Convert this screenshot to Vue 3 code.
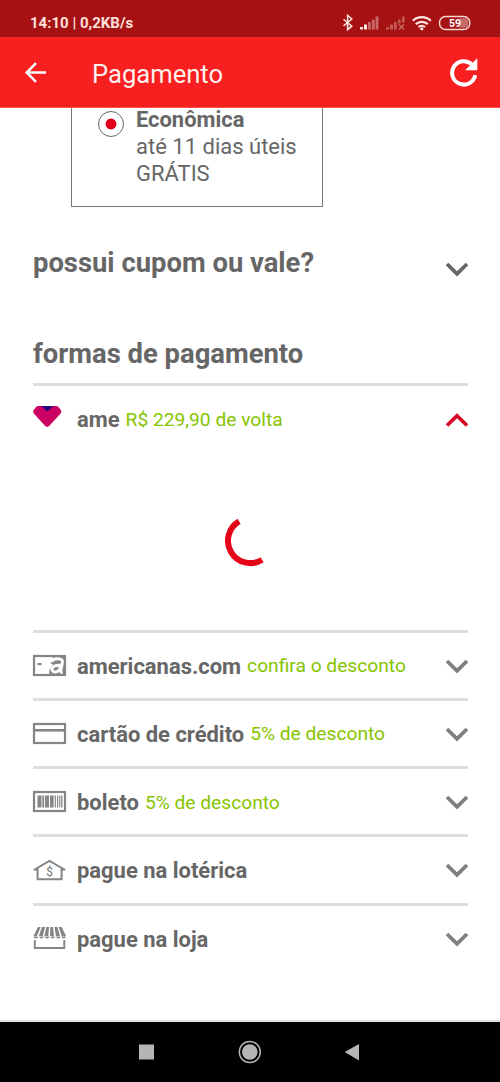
<script setup>
const methods = [
  { id: 'ame', name: 'ame', note: 'R$ 229,90 de volta', open: true },
  { id: 'gift', name: 'americanas.com', note: 'confira o desconto' },
  { id: 'card', name: 'cartão de crédito', note: '5% de desconto' },
  { id: 'boleto', name: 'boleto', note: '5% de desconto' },
  { id: 'loterica', name: 'pague na lotérica' },
  { id: 'loja', name: 'pague na loja' },
]
const bars = [[4.5, 4], [9.3, 1.8], [12, 4], [17, 3.6], [21.7, 1.2], [24, 1.2], [26.2, 1.2], [28.2, 1.3]]
</script>

<template>
  <div class="screen">
    <header class="status">
      <span class="clock">14:10 | 0,2KB/s</span>
      <svg class="status-icons" width="132" height="20" viewBox="0 0 132 20">
        <path d="M3.5 6.2l8.300 7-4.200 3.500V2.300l4.200 3.700-8.300 7" fill="none" stroke="#fde9e5" stroke-width="1.500" />
        <g fill="#fde9e5">
          <rect x="20" y="14" width="3" height="2.500" />
          <rect x="24" y="11.500" width="3" height="5" />
          <g opacity=".4">
            <rect x="28" y="9" width="2.800" height="7.500" />
            <rect x="31.900" y="6.500" width="2.800" height="10" />
            <rect x="35.600" y="3.500" width="2.800" height="13" />
          </g>
          <g opacity=".32">
            <rect x="46" y="14" width="3" height="2.500" />
            <rect x="50" y="11.500" width="3" height="5" />
            <rect x="54" y="9" width="2.800" height="7.500" />
            <rect x="58" y="6.500" width="2.600" height="4" />
            <rect x="62" y="3.500" width="2.600" height="6" />
          </g>
        </g>
        <path d="M59 11.500l5 5m0-5l-5 5" stroke="#fde9e5" stroke-width="1.400" opacity=".4" />
        <g fill="none" stroke="#fde9e5" stroke-width="2.200">
          <path d="M72.800 7.800a13 13 0 0 1 18 0" />
          <path d="M75.800 11.100a9 9 0 0 1 12 0" />
          <path d="M78.500 14a5 5 0 0 1 6.600 0" />
        </g>
        <circle cx="81.800" cy="15.800" r="1.600" fill="#fde9e5" />
        <path d="M119.500 5.300h5.500q3.200 0 3.200 3v3.500q0 3-3.200 3h-5.500z" fill="#c76a69" />
        <rect x="99.500" y="3.500" width="30.300" height="13" rx="6" fill="none" stroke="#f6d5d0" stroke-width="1.500" />
        <text x="109" y="13.900" class="battery">59</text>
      </svg>
    </header>

    <div class="appbar">
      <svg class="back" width="24" height="24" viewBox="0 0 24 24">
        <path d="M22 12.500H3M12 3.200L2.700 12.500l9.300 9.300" fill="none" stroke="#fff" stroke-width="2.500" />
      </svg>
      <h1>Pagamento</h1>
      <svg class="reload" width="30" height="30" viewBox="0 0 30 30">
        <path d="M22.700 7.200A11.700 11.700 0 1 0 26.300 18.200" fill="none" stroke="#fff" stroke-width="4" />
        <path d="M28.300 1.200V13.300H16.200z" fill="#fff" />
      </svg>
    </div>

    <main class="content">
      <section class="shipping">
        <span class="radio"></span>
        <div class="ship-text">
          <strong>Econômica</strong>
          <span>até 11 dias úteis</span>
          <span>GRÁTIS</span>
        </div>
      </section>

      <section class="coupon">
        <h2>possui cupom ou vale?</h2>
        <svg class="chev" width="24" height="16" viewBox="0 0 24 16">
          <path d="M2 3L12 12.800 22 3" fill="none" stroke="#666" stroke-width="3.800" />
        </svg>
      </section>

      <h2 class="pay-title">formas de pagamento</h2>

      <ul class="methods">
        <li v-for="m in methods" :key="m.id" :class="{ open: m.open }">
          <div class="head">
            <svg class="icon" width="34" height="24" viewBox="0 0 34 24">
              <template v-if="m.id === 'ame'">
                <path d="M5.500 -1h17.500q1.500 0 2.500 1l2.500 3.300q1 1.600-.4 3.100L16.400 18.800q-2.200 2.300-4.400 0L.8 6.400Q-.5 4.900.5 3.300L3 0q1-1 2.500-1z" fill="#cd0063" />
                <path d="M8 -1h12.500l-4.500 4.300q-1.700 1.500-3.400 0z" fill="#2c0a80" />
              </template>
              <template v-else-if="m.id === 'gift'">
                <rect x="1" y="2" width="31" height="19" fill="#fff" stroke="#858585" stroke-width="2.200" />
                <path d="M20.500 2H33v20H17q-2-4.500 1-8.500l2-3.500-2.600-.5z" fill="#858585" />
                <rect x="4.500" y="9" width="4" height="2.200" fill="#858585" />
                <path d="M18.500 8Q19.500 4.500 25 4.700q5.200.1 4.400 4L27.800 16.500q-.4 2.200 1.800 2M27.800 11.200q-8.200-.2-8.800 3.700-.2 3.200 3.200 3.100 4.500-.3 5.200-5.200" fill="none" stroke="#fff" stroke-width="2.900" />
              </template>
              <template v-else-if="m.id === 'card'">
                <rect x="1" y="2" width="31" height="19" fill="none" stroke="#858585" stroke-width="2.200" />
                <path d="M1 8.300h31" stroke="#858585" stroke-width="2.600" />
              </template>
              <template v-else-if="m.id === 'boleto'">
                <rect x="1" y="2" width="31" height="19" fill="none" stroke="#858585" stroke-width="2.200" />
                <rect v-for="b in bars" :key="b[0]" :x="b[0]" y="5.500" :width="b[1]" height="12" fill="#858585" />
              </template>
              <template v-else-if="m.id === 'loterica'">
                <path d="M.8 12L16.500 2.800 32.200 12M4.600 10.500V21.200H28.600V10.500M1 11.400h4M28 11.400h4" fill="none" stroke="#858585" stroke-width="2" />
                <text x="16.500" y="17.500" class="dollar">$</text>
              </template>
              <template v-else>
                <path d="M1.800 13v8h29.500V13" fill="none" stroke="#858585" stroke-width="1.900" />
                <g fill="#858585">
                  <path d="M5 0h2.700L4 9H.5zM9 0h3L9.800 9H5.800zM13.300 0h2.700l-.7 9h-3.900zM17.300 0H20l1 9h-3.900zM21.400 0h3L27 9h-4zM25.700 0h3L33 9h-4.300z" />
                  <path d="M.5 9.600h4.600q-.3 2-2.300 2t-2.300-2zM6.200 9.600h4.600q-.3 2-2.300 2t-2.300-2zM11.800 9.600h4.600q-.3 2-2.300 2t-2.300-2zM17.400 9.600H22q-.3 2-2.300 2t-2.300-2zM23 9.600h4.600q-.3 2-2.300 2t-2.300-2zM28.500 9.600h4.600q-.3 2-2.300 2t-2.300-2z" />
                </g>
              </template>
            </svg>
            <span class="name">{{ m.name }}</span>
            <span v-if="m.note" class="note">{{ m.note }}</span>
            <svg class="chev" width="24" height="16" viewBox="0 0 24 16">
              <path v-if="m.open" d="M2 14.500L12 4.700 22 14.500" fill="none" stroke="#d90424" stroke-width="3.600" />
              <path v-else d="M2 3L12 12.800 22 3" fill="none" stroke="#808080" stroke-width="3.800" />
            </svg>
          </div>
          <div v-if="m.open" class="loading">
            <svg width="48" height="52" viewBox="0 0 48 52">
              <path d="M17.100 6.400A22.300 22.300 0 0 0 9 36.900A22.300 22.300 0 0 0 40.100 44.700" fill="none" stroke="#e40518" stroke-width="6" />
            </svg>
          </div>
        </li>
      </ul>
    </main>

    <nav class="navbar">
      <svg width="500" height="60" viewBox="0 0 500 60">
        <rect x="139" y="22.500" width="15" height="15" fill="#b5b5b5" />
        <circle cx="249.800" cy="30" r="10.500" fill="none" stroke="#b5b5b5" stroke-width="1.500" />
        <circle cx="249.800" cy="30" r="7.800" fill="#b5b5b5" />
        <path d="M344.700 30L359 22v16.500z" fill="#b5b5b5" />
      </svg>
    </nav>
  </div>
</template>

<style>
body { margin: 0; }
</style>

<style scoped>
.screen {
  width: 500px;
  height: 1082px;
  display: flex;
  flex-direction: column;
  overflow: hidden;
  background: #fff;
  color: #666;
  font-family: Roboto, "Liberation Sans", sans-serif;
}
.status {
  flex: none;
  box-sizing: border-box;
  height: 37px;
  padding: 9px 28px 0 30px;
  display: flex;
  justify-content: space-between;
  align-items: center;
  background: #a61214;
}
.status-icons { margin-top: -1px; }
.clock { font-size: 15px; font-weight: 700; color: #fde0dc; white-space: nowrap; }
.battery { font-size: 10.500px; font-weight: 700; fill: #fff; }
.appbar {
  flex: none;
  box-sizing: border-box;
  height: 71px;
  padding: 0 21px 0 24px;
  display: flex;
  align-items: center;
  background: #f71f1f;
  border-bottom: 1px solid #f7504e;
}
h1 { margin: 4px 0 0 44px; font-size: 25.600px; font-weight: 400; color: #fff0ec; }
.reload { margin-left: auto; }
h2 { margin: 0; font-size: 27.400px; line-height: 32px; font-weight: 700; white-space: nowrap; }
.content { flex: 1; overflow: hidden; padding: 0 32px 0 33px; border-bottom: 2px solid #dfe1e3; }
.shipping {
  box-sizing: border-box;
  width: 252px;
  height: 99px;
  margin-left: 38px;
  padding-left: 26px;
  display: flex;
  gap: 12px;
  border: solid #777;
  border-width: 0 1px 1px;
}
.radio {
  box-sizing: border-box;
  width: 26px;
  height: 26px;
  margin-top: 3px;
  border: 1px solid #666;
  border-radius: 50%;
  background: radial-gradient(circle, #e2001a 5px, #fff 5.800px);
}
.ship-text { display: flex; flex-direction: column; font-size: 22px; line-height: 27.500px; white-space: nowrap; }
.ship-text strong { font-size: 21.900px; line-height: 24.500px; }
.coupon { display: flex; justify-content: space-between; align-items: center; margin-top: 40px; }
.coupon .chev { margin-top: 12px; }
.chev { flex: none; margin-left: auto; margin-right: -.5px; }
.pay-title { margin-top: 59px; }
.methods { list-style: none; margin: 13px 0 0; padding: 0; }
li { box-sizing: border-box; height: 68.300px; border-top: 3px solid #dedede; }
li.open { height: 246.500px; }
.head { display: flex; align-items: center; height: 66px; }
.icon { flex: none; margin-right: 10px; overflow: visible; }
.name { font-size: 21.950px; font-weight: 700; white-space: nowrap; margin-top: 1px; }
.note { margin: 0 0 0 6px; font-size: 19.200px; color: #86c400; white-space: nowrap; }
.dollar { font-size: 12px; text-anchor: middle; fill: #777; }
.loading { display: flex; justify-content: center; margin: 63px 9px 0 0; }
.navbar { flex: none; height: 60px; background: #000; }
.navbar svg { display: block; }
</style>
